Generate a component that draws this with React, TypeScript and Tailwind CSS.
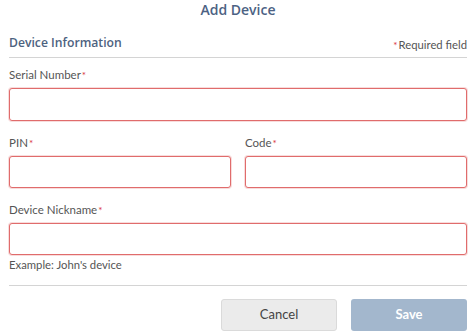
import React from "react";

// one required text field with label
const Field = ({ label, className = "" }: { label: string; className?: string }) => (
  <div className={`flex flex-col ${className}`}>
    <label className="text-[11.5px] text-[#555] leading-[14px] h-[14px]">
      {label}
      <span className="text-[#d9363e] text-[10px] ml-[1px] align-top">*</span>
    </label>
    <input className="mt-[6px] h-[33px] w-full rounded-[3px] border border-[#e06c6c] shadow-[0_0_0_1px_rgba(229,115,115,0.25)] bg-white outline-none" />
  </div>
);

export default function App() {
  return (
    <div
      className="w-[474px] h-[334px] bg-white pl-[9px] pr-[7px] overflow-hidden"
      style={{ fontFamily: "Lato, 'Open Sans', sans-serif" }}
    >
      <h1
        className="text-center text-[14px] font-semibold text-[#4c6283] leading-[20px]"
        style={{ fontFamily: "'Open Sans', sans-serif" }}
      >
        Add Device
      </h1>

      {/* section header */}
      <div className="mt-[14px] flex items-end justify-between border-b border-[#d4d4d4] pb-[5px]">
        <h2
          className="text-[12.2px] font-semibold text-[#4d6280] leading-[18px]"
          style={{ fontFamily: "'Open Sans', sans-serif" }}
        >
          Device Information
        </h2>
        <span className="text-[11.3px] text-[#555] leading-[14px]">
          <span className="text-[#d9363e] text-[10px] mr-[1px]">*</span>Required field
        </span>
      </div>

      <div className="pt-[10px] flex flex-col">
        <Field label="Serial Number" />
        <div className="mt-[15px] flex gap-[14px]">
          <Field label="PIN" className="flex-1 [&>input]:h-[32px]" />
          <Field label="Code" className="flex-1 [&>input]:h-[32px]" />
        </div>
        <Field label="Device Nickname" className="mt-[15px] [&>input]:h-[32px]" />
        <p className="mt-[3px] text-[11.3px] text-[#555] leading-[14px]">Example: John's device</p>
      </div>

      <div className="mt-[13px] border-t border-[#d4d4d4]" />

      <div className="mt-[13px] flex justify-end gap-[14px]">
        <button className="w-[116px] h-[32px] rounded-[3px] border border-[#dadada] bg-[#ebebeb] text-[13px] text-[#444]">
          Cancel
        </button>
        <button className="w-[116px] h-[32px] rounded-[3px] bg-[#a3b7cd] text-[13px] font-bold text-white">
          Save
        </button>
      </div>
    </div>
  );
}
